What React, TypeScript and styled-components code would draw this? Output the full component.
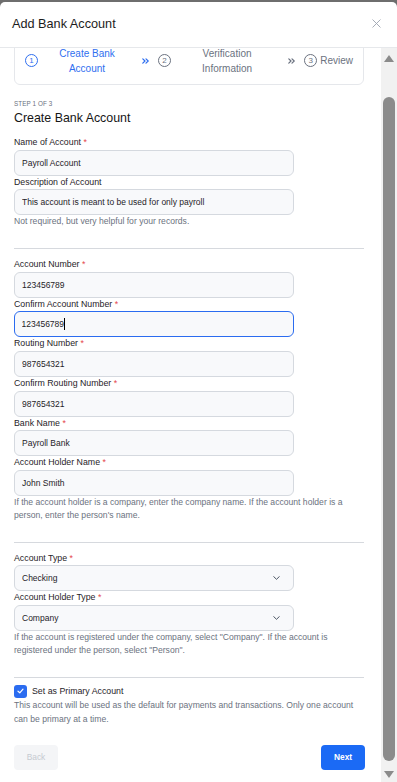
import React, { useLayoutEffect, useRef, useState } from "react";
import styled, { createGlobalStyle } from "styled-components";

const Global = createGlobalStyle`
  html, body { margin: 0; padding: 0; background: #6e6e6e; overflow: hidden; }
  body { font-family: "Liberation Sans", Arial, sans-serif; }
  * { box-sizing: border-box; }
`;

const Modal = styled.div`
  margin-top: 2px;
  height: 780px;
  background: #ffffff;
  border-radius: 5px 5px 0 0;
  display: flex;
  flex-direction: column;
  overflow: hidden;
`;

const Header = styled.header`
  flex: none;
  height: 46px;
  display: flex;
  align-items: center;
  justify-content: space-between;
  padding: 0 16px 2px 12px;
  border-bottom: 1px solid #e6e8eb;
`;

const Title = styled.h1`
  margin: 0;
  font-size: 12.7px;
  font-weight: 400;
  color: #1c1c1c;
`;

const CloseButton = styled.button`
  border: 0;
  background: none;
  padding: 0;
  width: 9px;
  height: 9px;
  display: flex;
  color: #9ca3af;
`;

const BodyRow = styled.div`
  flex: 1;
  min-height: 0;
  display: flex;
`;

const Viewport = styled.div`
  flex: 1;
  min-width: 0;
  overflow: hidden;
  padding: 24px 17px 17px 14px;
`;

const ScrollBar = styled.div`
  flex: none;
  width: 16px;
  background: #f1f1f1;
  display: flex;
  flex-direction: column;
`;

const ScrollArrow = styled.div<{ $down?: boolean }>`
  flex: none;
  height: 16px;
  display: flex;
  justify-content: center;
  align-items: ${(p) => (p.$down ? "center" : "flex-end")};
  padding-bottom: ${(p) => (p.$down ? "0" : "2px")};
`;

const ScrollTrack = styled.div`
  flex: 1;
  display: flex;
  flex-direction: column;
  align-items: center;
`;

const ScrollThumb = styled.div`
  width: 12px;
  border-radius: 6px;
  background: #8b8b8b;
`;

const Stepper = styled.nav`
  height: 49px;
  border: 1px solid #e5e7eb;
  border-radius: 6px;
  padding: 0 10px;
  display: flex;
  align-items: center;
`;

const StepItem = styled.div<{ $gap: number }>`
  display: flex;
  align-items: center;
  gap: ${(p) => p.$gap}px;
`;

const StepCircle = styled.span<{ $active?: boolean }>`
  width: 13px;
  height: 13px;
  flex: none;
  border-radius: 50%;
  border: 1px solid ${(p) => (p.$active ? "#2f6ff0" : "#6b7280")};
  color: ${(p) => (p.$active ? "#2f6ff0" : "#6b7280")};
  font-size: 8px;
  line-height: 11px;
  text-align: center;
`;

const StepLabel = styled.span<{ $active?: boolean; $width?: number; $pad?: number }>`
  width: ${(p) => (p.$width ? `${p.$width}px` : "auto")};
  padding: 0 ${(p) => p.$pad ?? 0}px;
  text-align: center;
  font-size: 10px;
  line-height: 15px;
  color: ${(p) => (p.$active ? "#2f6ff0" : "#6b7280")};
`;

const ChevronBox = styled.span<{ $width: number }>`
  width: ${(p) => p.$width}px;
  display: flex;
  justify-content: center;
  align-items: center;
`;

const StepCaption = styled.div`
  margin-top: 13.5px;
  font-size: 6.3px;
  line-height: 9px;
  color: #6b7280;
  letter-spacing: 0.1px;
`;

const Heading = styled.h2`
  margin: 2.5px 0 0;
  font-size: 12.4px;
  line-height: 16px;
  font-weight: 400;
  color: #161616;
`;

const Section = styled.section<{ $top: number }>`
  margin-top: ${(p) => p.$top}px;
`;

const Field = styled.div`
  display: flex;
  flex-direction: column;
`;

const Label = styled.label`
  font-size: 8.8px;
  line-height: 12px;
  color: #1f2328;
  margin-bottom: 1.6px;
`;

const Req = styled.span`
  color: #e5484d;
`;

const InputWrap = styled.div`
  position: relative;
  width: 80%;
`;

const TextInput = styled.input<{ $focused?: boolean }>`
  width: 100%;
  height: 26px;
  border-radius: 6px;
  border: ${(p) => (p.$focused ? "1.5px solid #2b6cf0" : "1px solid #d5d9df")};
  background: #f8f9fb;
  padding: 0 0 0 ${(p) => (p.$focused ? "6.5px" : "7px")};
  font-family: inherit;
  font-size: 8.5px;
  color: #1f2328;
  caret-color: transparent;
  outline: none;
`;

const Caret = styled.span`
  position: absolute;
  left: 50px;
  top: 7px;
  width: 1.2px;
  height: 12px;
  background: #000;
`;

const Select = styled.select`
  width: 100%;
  height: 26px;
  appearance: none;
  border-radius: 6px;
  border: 1px solid #d5d9df;
  background: #f8f9fb;
  padding: 0 0 0 7px;
  font-family: inherit;
  font-size: 8.5px;
  color: #1f2328;
  outline: none;
`;

const SelectChevron = styled.svg`
  position: absolute;
  right: 14px;
  top: 11px;
  pointer-events: none;
`;

const Helper = styled.p<{ $lh?: number }>`
  margin: 0;
  font-size: 8.6px;
  line-height: ${(p) => p.$lh ?? 13}px;
  color: #6b7280;
`;

const Divider = styled.hr<{ $after?: number }>`
  margin: 20px 0 ${(p) => p.$after ?? 9}px;
  border: 0;
  border-top: 1px solid #d6d9de;
`;

const CheckRow = styled.label`
  margin-top: 7px;
  display: flex;
  align-items: center;
  gap: 5px;
  font-size: 8.8px;
  line-height: 13px;
  color: #1f2328;
`;

const CheckBox = styled.span`
  width: 13px;
  height: 13px;
  border-radius: 3px;
  background: #2b6cf0;
  display: flex;
  align-items: center;
  justify-content: center;
`;

const Footer = styled.div`
  margin-top: 19px;
  display: flex;
  justify-content: space-between;
`;

const Button = styled.button<{ $primary?: boolean }>`
  width: 44px;
  height: 25px;
  border: 0;
  border-radius: 4px;
  font-family: inherit;
  font-size: 8.4px;
  font-weight: ${(p) => (p.$primary ? 700 : 400)};
  background: ${(p) => (p.$primary ? "#1b6af5" : "#f4f5f7")};
  color: ${(p) => (p.$primary ? "#ffffff" : "#c6cad1")};
  margin-right: ${(p) => (p.$primary ? "-1px" : "0")};
`;

const Chevrons = ({ color }: { color: string }) => (
  <svg width="7" height="6" viewBox="0 0 7 6" fill="none" stroke={color} strokeWidth="1.2" strokeLinecap="round" strokeLinejoin="round">
    <path d="M0.8 0.8 L3 3 L0.8 5.2" />
    <path d="M4 0.8 L6.2 3 L4 5.2" />
  </svg>
);

type FieldDef = { label: string; req?: boolean; value: string; focused?: boolean };

const InputField = ({ f }: { f: FieldDef }) => (
  <Field>
    <Label>
      {f.label}
      {f.req && <Req> *</Req>}
    </Label>
    <InputWrap>
      <TextInput defaultValue={f.value} $focused={f.focused} />
      {f.focused && <Caret />}
    </InputWrap>
  </Field>
);

const SelectField = ({ label, value }: { label: string; value: string }) => (
  <Field>
    <Label>
      {label}
      <Req> *</Req>
    </Label>
    <InputWrap>
      <Select defaultValue={value}>
        <option>{value}</option>
      </Select>
      <SelectChevron width="7" height="4" viewBox="0 0 7 4" fill="none" stroke="#4b5563" strokeWidth="1" strokeLinecap="round">
        <path d="M0.7 0.6 L3.5 3.3 L6.3 0.6" />
      </SelectChevron>
    </InputWrap>
  </Field>
);

const section1: FieldDef[] = [
  { label: "Name of Account", req: true, value: "Payroll Account" },
  { label: "Description of Account", value: "This account is meant to be used for only payroll" },
];

const section2: FieldDef[] = [
  { label: "Account Number", req: true, value: "123456789" },
  { label: "Confirm Account Number", req: true, value: "123456789", focused: true },
  { label: "Routing Number", req: true, value: "987654321" },
  { label: "Confirm Routing Number", req: true, value: "987654321" },
  { label: "Bank Name", req: true, value: "Payroll Bank" },
  { label: "Account Holder Name", req: true, value: "John Smith" },
];

export default function App() {
  const viewRef = useRef<HTMLDivElement>(null);
  const [thumb, setThumb] = useState({ top: 33, height: 665 });

  useLayoutEffect(() => {
    const v = viewRef.current;
    if (!v) return;
    v.scrollTop = 36;
    const track = v.clientHeight - 32;
    const sh = v.scrollHeight;
    setThumb({
      top: (track * v.scrollTop) / sh,
      height: (track * v.clientHeight) / sh,
    });
  }, []);

  return (
    <>
      <Global />
      <Modal>
        <Header>
          <Title>Add Bank Account</Title>
          <CloseButton aria-label="Close">
            <svg width="9" height="9" viewBox="0 0 9 9" stroke="currentColor" strokeWidth="0.9" strokeLinecap="round">
              <path d="M0.8 0.8 L8.2 8.2 M8.2 0.8 L0.8 8.2" />
            </svg>
          </CloseButton>
        </Header>
        <BodyRow>
          <Viewport ref={viewRef}>
            <Stepper>
              <StepItem $gap={4}>
                <StepCircle $active>1</StepCircle>
                <StepLabel $active $width={90}>Create Bank Account</StepLabel>
              </StepItem>
              <ChevronBox $width={27}>
                <Chevrons color="#2f6ff0" />
              </ChevronBox>
              <StepItem $gap={4}>
                <StepCircle>2</StepCircle>
                <StepLabel $width={104} $pad={10}>Verification Information</StepLabel>
              </StepItem>
              <ChevronBox $width={26}>
                <Chevrons color="#6b7280" />
              </ChevronBox>
              <StepItem $gap={3}>
                <StepCircle>3</StepCircle>
                <StepLabel>Review</StepLabel>
              </StepItem>
            </Stepper>

            <StepCaption>STEP 1 OF 3</StepCaption>
            <Heading>Create Bank Account</Heading>

            <Section $top={10}>
              {section1.map((f) => (
                <InputField key={f.label} f={f} />
              ))}
              <Helper>Not required, but very helpful for your records.</Helper>
            </Section>

            <Divider />

            <Section $top={0}>
              {section2.map((f) => (
                <InputField key={f.label} f={f} />
              ))}
              <Helper>
                If the account holder is a company, enter the company name. If the account holder is a person, enter
                the person's name.
              </Helper>
            </Section>

            <Divider />

            <Section $top={0}>
              <SelectField label="Account Type" value="Checking" />
              <SelectField label="Account Holder Type" value="Company" />
              <Helper>
                If the account is registered under the company, select "Company". If the account is registered under
                the person, select "Person".
              </Helper>
            </Section>

            <Divider $after={0} />

            <CheckRow>
              <CheckBox>
                <svg width="7" height="6" viewBox="0 0 7 6" fill="none" stroke="#fff" strokeWidth="1.2" strokeLinecap="round" strokeLinejoin="round">
                  <path d="M1 3.2 L2.8 4.8 L6 1.2" />
                </svg>
              </CheckBox>
              Set as Primary Account
            </CheckRow>
            <Helper $lh={14}>
              This account will be used as the default for payments and transactions. Only one account can be primary
              at a time.
            </Helper>

            <Footer>
              <Button disabled>Back</Button>
              <Button $primary>Next</Button>
            </Footer>
          </Viewport>
          <ScrollBar aria-hidden="true">
            <ScrollArrow>
              <svg width="10" height="7" viewBox="0 0 10 7">
                <path d="M5 0 L10 7 L0 7 Z" fill="#8b8b8b" />
              </svg>
            </ScrollArrow>
            <ScrollTrack>
              <ScrollThumb style={{ marginTop: thumb.top, height: thumb.height }} />
            </ScrollTrack>
            <ScrollArrow $down>
              <svg width="10" height="7" viewBox="0 0 10 7">
                <path d="M0 0 L10 0 L5 7 Z" fill="#8b8b8b" />
              </svg>
            </ScrollArrow>
          </ScrollBar>
        </BodyRow>
      </Modal>
    </>
  );
}
